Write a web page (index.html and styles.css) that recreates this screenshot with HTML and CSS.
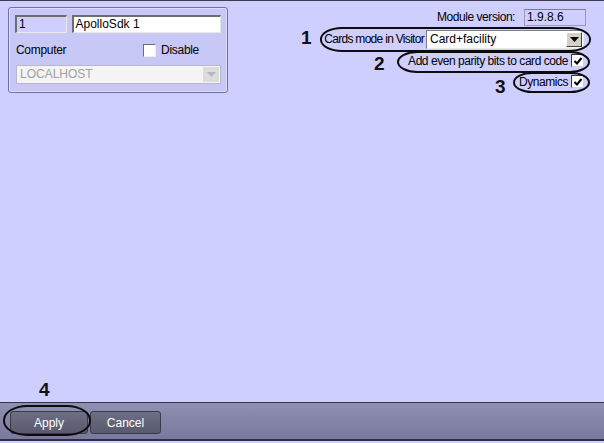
FILE: index.html
```html
<!DOCTYPE html>
<html>
<head>
<meta charset="utf-8">
<link rel="stylesheet" href="styles.css">
</head>
<body>
<div class="main">
  <div class="panel">
    <div class="row">
      <div class="field num">1</div>
      <div class="field name">ApolloSdk 1</div>
    </div>
    <div class="row between">
      <span class="lbl">Computer</span>
      <span class="chk-wrap"><span class="chk"></span><span class="lbl">Disable</span></span>
    </div>
    <div class="combo disabled">
      <span class="combo-text">LOCALHOST</span>
      <span class="arrow-btn dis"><svg width="9" height="5" viewBox="0 0 9 5"><path d="M0 0H9L4.5 5Z" fill="#b8b8b8"/></svg></span>
    </div>
  </div>

  <div class="settings">
    <div class="srow">
      <span class="lbl">Module version:</span>
      <div class="field ver">1.9.8.6</div>
    </div>
    <div class="srow mode">
      <span class="lbl narrow">Cards mode in Visitor</span>
      <div class="combo card">
        <span class="combo-text dark">Card+facility</span>
        <span class="arrow-btn"><svg width="9" height="5" viewBox="0 0 9 5"><path d="M0 0H9L4.5 5Z" fill="#000"/></svg></span>
      </div>
    </div>
    <div class="srow">
      <span class="lbl">Add even parity bits to card code</span>
      <span class="chk on"><svg width="10" height="10" viewBox="0 0 10 10"><path d="M1.5 5 L4 7.5 L8.5 2" fill="none" stroke="#000" stroke-width="2"/></svg></span>
    </div>
    <div class="srow">
      <span class="lbl">Dynamics</span>
      <span class="chk on"><svg width="10" height="10" viewBox="0 0 10 10"><path d="M1.5 5 L4 7.5 L8.5 2" fill="none" stroke="#000" stroke-width="2"/></svg></span>
    </div>
  </div>

  <span class="mark n1">1</span>
  <span class="mark n2">2</span>
  <span class="mark n3">3</span>
  <span class="mark n4">4</span>
  <span class="oval o1"></span>
  <span class="oval o2"></span>
  <span class="oval o3"></span>
</div>
<div class="footer">
  <button class="btn apply">Apply</button>
  <button class="btn cancel">Cancel</button>
  <span class="oval o4"></span>
</div>
</body>
</html>
```

FILE: styles.css
```css
html, body {
  margin: 0;
  padding: 0;
}
body {
  width: 604px;
  height: 443px;
  overflow: hidden;
  background: #cfcfff;
  font-family: "Liberation Sans", Arial, sans-serif;
  font-size: 12px;
  color: #000;
  border-top: 1px solid #3c3c4c;
  box-sizing: border-box;
}
.main {
  position: relative;
  height: 402px;
  box-sizing: border-box;
  padding: 6px 20px 0 8px;
  display: flex;
  justify-content: space-between;
  align-items: flex-start;
  border-bottom: 1px solid #34344a;
}
.panel {
  width: 220px;
  height: 86px;
  box-sizing: border-box;
  background: #c8c8f6;
  border: 1px solid #7272a0;
  border-radius: 3px;
  box-shadow: inset 0 0 0 1px #dcdcff;
  padding: 7px 6px 0 6px;
  display: flex;
  flex-direction: column;
}
.row {
  display: flex;
  gap: 5px;
  align-items: center;
}
.row.between {
  justify-content: space-between;
  margin-top: 10px;
  padding-left: 1px;
  padding-right: 22px;
  height: 14px;
  letter-spacing: -0.3px;
}
.field {
  height: 18px;
  box-sizing: border-box;
  border-top: 2px solid #6d6d6d;
  border-left: 2px solid #6d6d6d;
  border-right: 1px solid #e8e8e8;
  border-bottom: 1px solid #e8e8e8;
  background: #fff;
  line-height: 15px;
  padding-left: 2px;
  white-space: nowrap;
}
.field.num {
  width: 52px;
  background: #cfcfff;
}
.field.name {
  width: 151px;
}
.lbl {
  white-space: nowrap;
  line-height: 14px;
}
.chk-wrap {
  display: flex;
  align-items: center;
  gap: 5px;
}
.chk {
  width: 13px;
  height: 13px;
  box-sizing: border-box;
  background: #fff;
  border-top: 1px solid #6d6d6d;
  border-left: 1px solid #6d6d6d;
  border-right: 1px solid #f0f0f0;
  border-bottom: 1px solid #f0f0f0;
  display: inline-flex;
  align-items: center;
  justify-content: center;
}
.chk.on {
  border: 1px solid #3a3a3a;
  border-right-color: #d0d0d0;
  border-bottom-color: #d0d0d0;
}
.combo {
  height: 19px;
  box-sizing: border-box;
  display: flex;
  align-items: center;
  background: #fff;
  border-top: 1px solid #7c7c90;
  border-left: 1px solid #7c7c90;
  border-right: 1px solid #e8e8f0;
  border-bottom: 1px solid #e8e8f0;
  padding: 1px;
}
.combo.disabled {
  margin-top: 8px;
  margin-left: 1px;
  width: 205px;
  background: #f4f4f4;
  border: 1px solid #b8b8c8;
}
.combo-text {
  flex: 1;
  color: #a0a0a0;
  padding-left: 2px;
  line-height: 15px;
}
.combo-text.dark {
  color: #000;
}
.arrow-btn {
  width: 16px;
  height: 15px;
  box-sizing: border-box;
  background: #d4d0c8;
  border-top: 1px solid #fff;
  border-left: 1px solid #fff;
  border-right: 1px solid #404040;
  border-bottom: 1px solid #404040;
  display: flex;
  align-items: center;
  justify-content: center;
}
.arrow-btn.dis {
  background: #dcdcdc;
  border: none;
}
.settings {
  display: flex;
  flex-direction: column;
  align-items: flex-end;
  gap: 0;
}
.settings .lbl {
  letter-spacing: -0.45px;
}
.settings .lbl.narrow {
  letter-spacing: -0.7px;
}
.srow {
  display: flex;
  align-items: center;
  gap: 3px;
  height: 21px;
}
.srow:first-child {
  height: 18px;
  margin-top: 1px;
  gap: 9px;
  margin-right: -2px;
}
.srow.mode {
  height: 22px;
  gap: 2px;
  margin-top: 2px;
}
.field.ver {
  width: 62px;
  height: 17px;
  background: #cfcfff;
  border: 1px solid #9a9ab0;
  border-top-color: #7a7a90;
  line-height: 15px;
}
.combo.card {
  width: 158px;
}
.mark {
  position: absolute;
  font-weight: bold;
  font-size: 19px;
  line-height: 19px;
  color: #111;
}
.n1 { left: 301px; top: 27px; }
.n2 { left: 374px; top: 53px; }
.n3 { left: 495px; top: 76px; }
.n4 { left: 39px; top: 379px; }
.oval {
  position: absolute;
  box-sizing: border-box;
  border: 2.5px solid #0c0c0c;
  border-radius: 22px / 12px;
  pointer-events: none;
}
.o1 { left: 320px; top: 26px; width: 271px; height: 25px; }
.o2 { left: 397px; top: 50px; width: 193px; height: 22px; }
.o3 { left: 513px; top: 71px; width: 77px; height: 21px; }
.footer {
  position: relative;
  height: 38px;
  box-sizing: border-box;
  background: linear-gradient(#9090b2, #7878a0);
  border-bottom: 2px solid #30303c;
  padding: 8px 0 0 10px;
  display: flex;
  gap: 2px;
  align-items: flex-start;
}
.btn {
  height: 23px;
  box-sizing: border-box;
  background: linear-gradient(#6e6e84, #5a5a6e);
  border: 1px solid #3a3a4a;
  border-radius: 3px;
  color: #fff;
  font-family: "Liberation Sans", Arial, sans-serif;
  font-size: 12px;
  padding: 0;
}
.btn.apply { width: 78px; }
.btn.cancel { width: 71px; }
.o4 { left: 3px; top: 2px; width: 88px; height: 31px; border-radius: 24px / 15px; }
```
